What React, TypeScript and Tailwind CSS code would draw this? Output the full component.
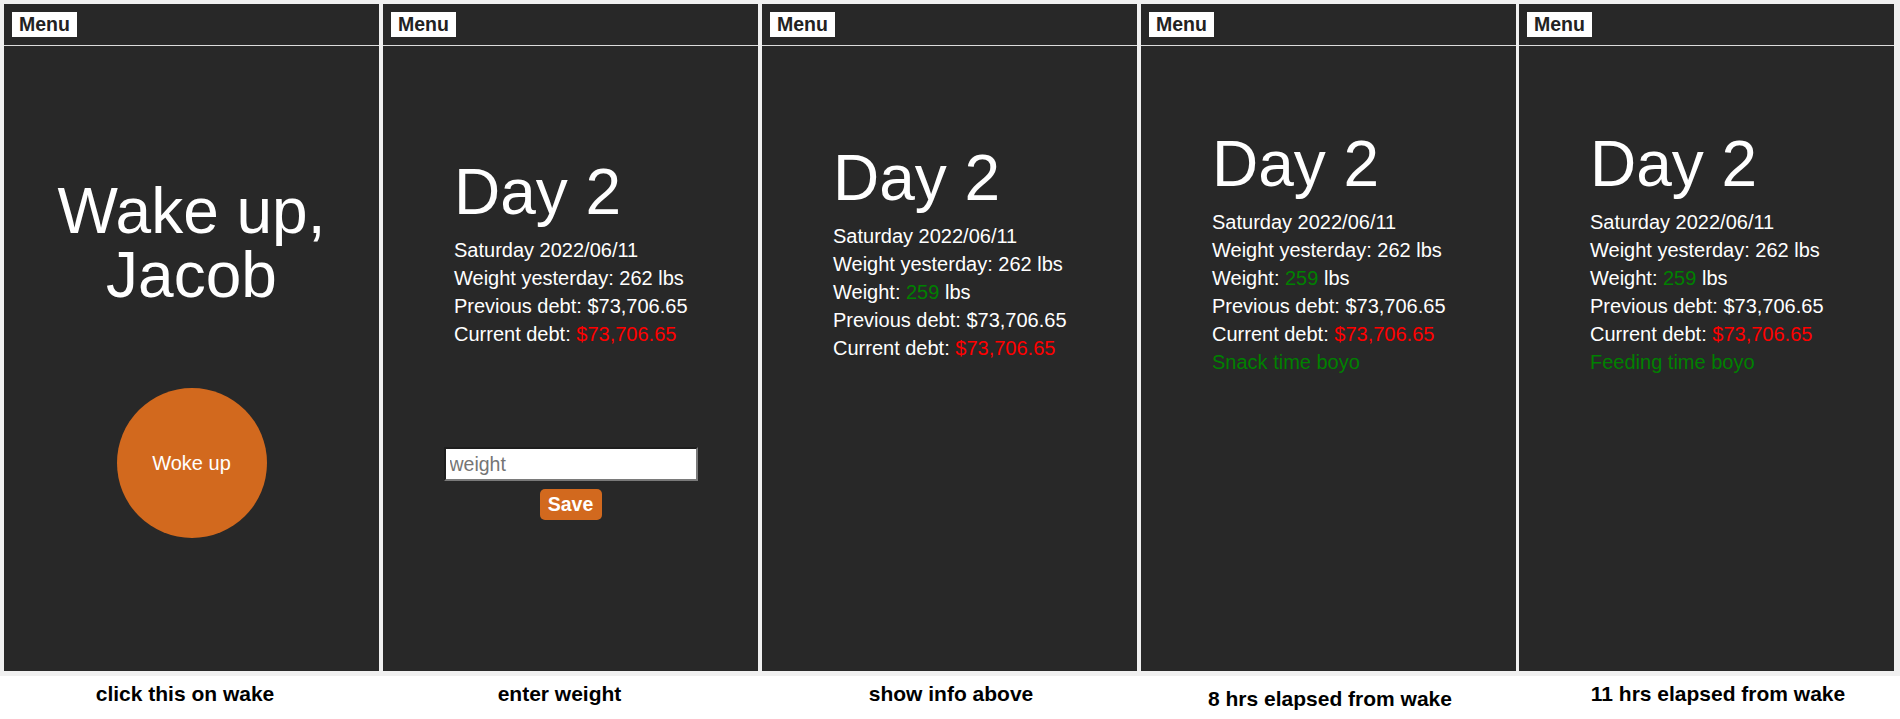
import React from 'react';

const Header: React.FC = () => (
  <div className="h-[42px] border-b border-[#dcdcdc] p-[8px]">
    <button className="block h-[25px] bg-white px-[7px] text-[19.5px] font-bold leading-[25px] text-[#222]">
      Menu
    </button>
  </div>
);

type InfoProps = { weight?: boolean; note?: string };

// "Day 2" block used by the last four screens
const DayInfo: React.FC<InfoProps> = ({ weight, note }) => (
  <div className="pl-[71px] text-white">
    <h1 className="mb-[12px] text-[64px] leading-[63px]">Day 2</h1>
    <div className="text-[20px] leading-[28px]">
      <p>Saturday 2022/06/11</p>
      <p>Weight yesterday: 262 lbs</p>
      {weight && (
        <p>
          Weight: <span className="text-[#008000]">259</span> lbs
        </p>
      )}
      <p>Previous debt: $73,706.65</p>
      <p>
        Current debt: <span className="text-[#ff0000]">$73,706.65</span>
      </p>
      {note && <p className="text-[#008000]">{note}</p>}
    </div>
  </div>
);

const Panel: React.FC<{ children: React.ReactNode; className?: string }> = ({ children, className = '' }) => (
  <div className={`h-[667px] w-[375px] shrink-0 bg-[#282828] ${className}`}>
    <Header />
    {children}
  </div>
);

const labels = [
  { text: 'click this on wake', cls: 'pr-[13px]' },
  { text: 'enter weight', cls: 'pr-[22px]' },
  { text: 'show info above', cls: 'pl-[3px]' },
  { text: '8 hrs elapsed from wake', cls: 'pl-[3px] pt-[5px]' },
  { text: '11 hrs elapsed from wake', cls: 'pl-[23px]' },
];

export default function App() {
  return (
    <div className="h-[719px] w-[1900px] overflow-hidden bg-white font-['Liberation_Sans',Arial,sans-serif]">
      <div className="flex gap-[4px] bg-[#f0f0f0] px-[4px] pt-[4px] pb-[5px]">
        <Panel>
          <div className="pt-[133px]">
            <h1 className="text-center text-[64px] leading-[64px] text-white">
              Wake up,
              <br />
              Jacob
            </h1>
            <button className="mx-auto mt-[81px] flex h-[150px] w-[150px] items-center justify-center rounded-full bg-[#d2691e] text-[20px] text-white">
              Woke up
            </button>
          </div>
        </Panel>
        <Panel>
          <div className="pt-[115px]">
            <DayInfo />
            <div className="mt-[99px] flex flex-col items-center">
              <input
                placeholder="weight"
                className="h-[34px] w-[254px] border-2 border-t-[#1e1e1e] border-l-[#1e1e1e] border-b-[#7a7a7a] border-r-[#7a7a7a] bg-white px-[4px] text-[19.5px] text-black outline-none placeholder:text-[#757575]"
              />
              <button className="mt-[8px] h-[31px] w-[62px] rounded-[5px] bg-[#d2691e] text-[19.5px] font-bold text-white">
                Save
              </button>
            </div>
          </div>
        </Panel>
        <Panel>
          <div className="pt-[101px]">
            <DayInfo weight />
          </div>
        </Panel>
        <Panel>
          <div className="pt-[87px]">
            <DayInfo weight note="Snack time boyo" />
          </div>
        </Panel>
        <Panel className="-ml-px">
          <div className="pt-[87px]">
            <DayInfo weight note="Feeding time boyo" />
          </div>
        </Panel>
      </div>
      <div className="flex gap-[4px] px-[4px] pt-[6px]">
        {labels.map((l, i) => (
          <div
            key={l.text}
            className={`w-[375px] shrink-0 text-center text-[21px] font-bold leading-[24px] text-black ${l.cls} ${i === 4 ? '-ml-px' : ''}`}
          >
            {l.text}
          </div>
        ))}
      </div>
    </div>
  );
}
